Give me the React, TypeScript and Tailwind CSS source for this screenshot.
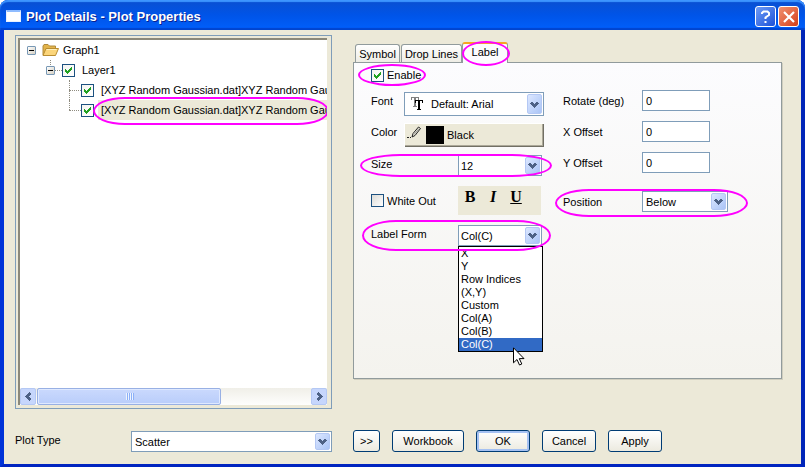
import { useState } from 'react';
import type { ReactNode } from 'react';

const BEVEL = 'shadow-[inset_1px_1px_0_#fff,inset_-1px_-1px_0_#716f64,inset_-2px_-2px_0_#aca899]';

function Chevron({ className = '' }: { className?: string }) {
  return (
    <svg viewBox="0 0 9 7" className={`h-[7px] w-[9px] ${className}`} shapeRendering="crispEdges">
      <path d="M1 1h2v1h1v1h1v-1h1v-1h2v1h1v1h-1v1h-1v1h-1v1h-1v1h-1v-1h-1v-1h-1v-1h-1v-1h-1v-1h1z" fill="#4d6185" />
    </svg>
  );
}

function ArrowBox() {
  return (
    <span className="pointer-events-none absolute inset-y-[2px] right-[2px] flex w-[15px] items-center justify-center rounded-xs border border-[#b4c8f4] bg-linear-to-br from-[#dce7ff] to-[#aac4f6]">
      <Chevron />
    </span>
  );
}

/** Highlight ring that calls attention to a control. */
function Ring({ className }: { className: string }) {
  return <span aria-hidden="true" className={`pointer-events-none absolute z-10 border-2 border-[#ff00ff] ${className}`} />;
}

function Combo({ id, options, value, className, inset = 'pl-[2px]', children }: {
  id: string; options: string[]; value: string; className: string; inset?: string; children?: ReactNode;
}) {
  return (
    <span className={`relative block shrink-0 ${className}`}>
      <select id={id} defaultValue={value} className={`block h-full w-full appearance-none border border-[#7f9db9] bg-white pr-4 outline-none ${inset}`}>
        {options.map((o) => <option key={o}>{o}</option>)}
      </select>
      {children}
      <ArrowBox />
    </span>
  );
}

function Check({ id, label, checked = false }: { id: string; label?: string; checked?: boolean }) {
  return (
    <span className="relative flex h-[14px] shrink-0 items-center gap-[3px]">
      <input id={id} type="checkbox" defaultChecked={checked} aria-label={label ? undefined : id}
        className="peer size-[13px] shrink-0 appearance-none border border-[#1c5180] bg-linear-to-br from-[#dcdcd7] to-white checked:from-[#f4f4f1]" />
      <svg viewBox="0 0 7 7" shapeRendering="crispEdges" className="pointer-events-none invisible absolute left-[3px] h-[7px] w-[7px] peer-checked:visible">
        <path d="M0 2h1v1h1v1h1v-1h1v-1h1v-1h1v-1h1v3h-1v1h-1v1h-1v1h-1v1h-1v-1h-1v-1h-1z" fill="#21a121" />
      </svg>
      {label && <label htmlFor={id} className="whitespace-nowrap">{label}</label>}
    </span>
  );
}

function Toggle({ label }: { label: string }) {
  return (
    <button type="button" aria-label={`Collapse ${label}`} className="relative flex size-[9px] shrink-0 items-center justify-center rounded-[1px] border border-[#7898b5] bg-linear-to-br from-white to-[#d5d0c3]">
      <span className="h-px w-[5px] bg-black" />
    </button>
  );
}

function Folder() {
  return (
    <svg viewBox="0 0 17 14" className="h-[14px] w-[17px]">
      <path d="M1 12V3l1-1.500h4l1.500 1.500h6V6" fill="#e3b44b" stroke="#b08a3c" />
      <path d="M1 12.500 4 5.500h12.500l-3 7z" fill="#fbd57a" stroke="#b98d31" />
      <path d="M4.500 6.500h10" stroke="#fff0bd" />
    </svg>
  );
}

function Tree() {
  const plot = '[XYZ Random Gaussian.dat]XYZ Random Gaussian';
  return (
    <div className="border border-[#7f9db9] bg-[#ece9d8] p-[2px] pr-[4px] pb-[3px]">
      <div className="flex h-full flex-col overflow-hidden border-t-2 border-l-2 border-[#8b887a] bg-white">
        <ul className="relative flex-1">
          <li className="flex h-5 items-center pl-[7px]">
            <Toggle label="Graph1" />
            <span className="ml-[6px]"><Folder /></span>
            <span className="ml-[4px]">Graph1</span>
          </li>
          <li className="relative flex h-5 items-center pl-[26px]">
            <span className="absolute top-0 left-[30px] h-[5px] border-l border-dotted border-[#8f8c80]" />
            <Toggle label="Layer1" />
            <span className="w-[7px] border-t border-dotted border-[#8f8c80]" />
            <Check id="Layer1 visible" checked />
            <span className="ml-[7px]">Layer1</span>
          </li>
          {[0, 1].map((i) => (
            <li key={i} className="relative flex h-5 items-center pl-[49px]">
              <span className={`absolute left-[49px] border-l border-dotted border-[#8f8c80] ${i ? 'top-0 h-[10px]' : 'top-0 h-5'}`} />
              <span className="w-[12px] shrink-0 border-t border-dotted border-[#8f8c80]" />
              <Check id={`Plot ${i + 1} visible`} checked />
              <span className={`ml-[4px] flex h-full min-w-0 flex-1 items-center overflow-hidden pl-[3px] whitespace-nowrap ${i ? 'bg-[#ece9d8]' : ''}`}>{plot}</span>
              {i === 1 && <Ring className="top-[-3px] right-[-2px] left-[73px] h-[28px] rounded-[32px/50%]" />}
            </li>
          ))}
        </ul>
        <div className="flex h-[17px] items-stretch bg-linear-to-b from-[#f0efe8] to-[#fefefd]">
          <button type="button" aria-label="Scroll left" className="flex w-[16px] items-center justify-center rounded-xs border border-[#b4c8f4] bg-[#c6d6fc]"><Chevron className="rotate-90" /></button>
          <div className="flex flex-1">
            <div className="ml-px flex w-[67%] items-center justify-center gap-px rounded-xs border border-[#98b0e4] bg-linear-to-b from-[#cad9fd] to-[#b9cdfa] shadow-[inset_0_0_0_1px_#dfe9ff]">
              {[0, 1, 2, 3].map((n) => <span key={n} className="h-[7px] w-px bg-[#eef4fe] shadow-[1px_0_0_#8cb0f8]" />)}
            </div>
          </div>
          <button type="button" aria-label="Scroll right" className="flex w-[16px] items-center justify-center rounded-xs border border-[#b4c8f4] bg-[#c6d6fc]"><Chevron className="-rotate-90" /></button>
        </div>
      </div>
    </div>
  );
}

const FORMS = ['X', 'Y', 'Row Indices', '(X,Y)', 'Custom', 'Col(A)', 'Col(B)', 'Col(C)'];

function FormList() {
  const [picked, setPicked] = useState('Col(C)');
  return (
    <div className="absolute top-full left-0 z-[5] w-[85px] border border-black bg-white">
      <ul role="listbox" aria-label="Label Form">
        {FORMS.map((f) => (
          <li key={f} role="option" aria-selected={f === picked} onClick={() => setPicked(f)}
            className={`h-[13px] pl-[2px] leading-[13px] ${f === picked ? 'bg-[#316ac5] text-white' : ''}`}>{f}</li>
        ))}
      </ul>
      <svg viewBox="0 0 12 19" className="absolute top-[100px] left-[54px] h-[19px] w-[12px]">
        <path d="M.5.800v15l3.500-3.300 2.500 5.500 2.300-1-2.500-5.400H11z" fill="#fff" stroke="#000" />
      </svg>
    </div>
  );
}

function LabelPage() {
  return (
    <div role="tabpanel" className="flex-1 border border-[#919b9c] bg-linear-to-b from-[#fcfcfe] to-[#f4f3ee] pt-[5px] pl-[17px] shadow-[1px_1px_0_#d0cebf]">
      <div className="relative w-fit">
        <Check id="enable" label="Enable" checked />
        <Ring className="top-[-4px] left-[-13px] h-[22px] w-[68px] rounded-[50%]" />
      </div>
      <div className="flex gap-[19px] pt-[8px]">
        <div className="flex w-[173px] shrink-0 flex-col pt-[2px]">
          <div className="flex h-6 items-start justify-between">
            <label htmlFor="font" className="pt-[2px]">Font</label>
            <Combo id="font" value="Default: Arial" options={['Default: Arial', 'Times New Roman']} className="h-6 w-[140px]" inset="pl-[26px]">
              <svg viewBox="0 0 13 14" shapeRendering="crispEdges" className="pointer-events-none absolute top-[5px] left-[7px] h-[14px] w-[13px]" fill="none">
                <path d="M0 .500h8M.5 0v3M7.500 0v3M2 9.500h4" stroke="#808080" /><path d="M4 1v9" stroke="#808080" strokeWidth="2" />
                <path d="M4 3.500h8M4.500 3v3M11.500 3v3M6 12.500h4" stroke="#000" /><path d="M8 3v10" stroke="#000" strokeWidth="2" />
              </svg>
            </Combo>
          </div>
          <div className="mt-[7px] flex h-6 items-start justify-between">
            <span className="pt-[2px]">Color</span>
            <button type="button" className={`flex h-6 w-[140px] items-center bg-[#ece9d8] pl-[3px] ${BEVEL}`}>
              <svg viewBox="0 0 15 13" className="mb-[5px] h-[13px] w-[15px]" fill="none" stroke="#222">
                <path d="M0 11.500h2M3 11.500h1M5 11l1-3.500L11.500 1l2 1.500L8 9.500z" /><path d="M7 8.500 12 2.500" stroke="#999" />
              </svg>
              <span className="ml-[4px] size-[18px] bg-black" />
              <span className="ml-[3px]">Black</span>
            </button>
          </div>
          <div className="relative mt-[8px] flex h-[21px] items-start">
            <label htmlFor="size" className="w-[87px] pt-[2px]">Size</label>
            <Combo id="size" value="12" options={['8', '10', '12', '14']} className="h-[21px] w-[84px]" />
            <Ring className="top-[-1px] left-[-11px] h-[23px] w-[192px] rounded-[40px/50%]" />
          </div>
          <div className="mt-[10px] flex h-[29px] items-center">
            <span className="w-[87px]"><Check id="whiteout" label="White Out" /></span>
            <div className="flex h-[29px] w-[83px] items-start gap-[5px] bg-[#ece9d8] pt-[3px] pl-[3px] font-['Liberation_Serif',serif] text-[16px] leading-4 font-bold">
              <button type="button" aria-label="Bold" className="w-[18px]">B</button>
              <button type="button" aria-label="Italic" className="w-[18px] italic">I</button>
              <button type="button" aria-label="Underline" className="w-[18px] underline underline-offset-1">U</button>
            </div>
          </div>
          <div className="relative mt-[10px] flex h-[21px] items-start">
            <label htmlFor="form" className="w-[87px] pt-[2px]">Label Form</label>
            <div className="relative">
              <Combo id="form" value="Col(C)" options={FORMS} className="h-[21px] w-[84px]" />
              <FormList />
            </div>
            <Ring className="top-[-5px] left-[-9px] h-[31px] w-[189px] rounded-[34px/50%]" />
          </div>
        </div>
        <div className="flex flex-col gap-[10px]">
          {['Rotate (deg)', 'X Offset', 'Y Offset'].map((name) => (
            <div key={name} className="flex h-[21px] items-center">
              <label htmlFor={name} className="w-[79px]">{name}</label>
              <input id={name} defaultValue="0" className="h-[21px] w-[68px] border border-[#7f9db9] bg-white pl-[3px] outline-none" />
            </div>
          ))}
          <div className="relative mt-[8px] flex h-[21px] items-center">
            <label htmlFor="position" className="w-[79px]">Position</label>
            <Combo id="position" value="Below" options={['Below', 'Above', 'Center', 'Left', 'Right']} className="h-[21px] w-[86px]" inset="pl-[3px]" />
            <Ring className="top-[-2px] left-[-8px] h-[28px] w-[193px] rounded-[34px/50%]" />
          </div>
        </div>
      </div>
    </div>
  );
}

const BUTTONS = [
  { text: '>>', width: 'w-[27px]' },
  { text: 'Workbook', width: 'w-[72px]' },
  { text: 'OK', width: 'w-[54px]' },
  { text: 'Cancel', width: 'w-[54px]' },
  { text: 'Apply', width: 'w-[54px]' },
];

export default function App() {
  const tab = 'h-[18px] rounded-t-[3px] border border-b-0 border-[#919b9c] bg-linear-to-b from-white to-[#eeede5]';
  return (
    <main className="flex min-h-screen flex-col rounded-t-lg bg-[#0842dc] font-['Liberation_Sans',Arial,sans-serif] text-[11px] leading-[14px] text-black">
      <header className="flex h-[30px] shrink-0 items-center rounded-t-lg bg-linear-to-b from-[#0a4fd0] via-[#0054e8] to-[#0060fc] pr-[6px] pl-[6px] shadow-[inset_0_2px_1px_#3d95ff,inset_0_-2px_1px_#0044cf]">
        <span className="mt-px h-[12px] w-[15px] border border-t-2 border-[#e8f0ff] border-t-[#8fbcff] bg-white" />
        <h1 className="ml-[5px] flex-1 pt-[3px] text-[13px] leading-4 font-bold text-white [text-shadow:1px_1px_0_#0a1f8f]">Plot Details - Plot Properties</h1>
        <div className="flex gap-[2px] pt-[3px]">
          <button type="button" aria-label="Help" className="flex size-[21px] items-center justify-center rounded-[3px] border border-white bg-linear-to-br from-[#6f9bf5] to-[#1c4fd8]">
            <svg viewBox="0 0 11 13" className="h-[13px] w-[11px]" fill="none" stroke="#fff" strokeWidth="2"><path d="M2 4V3l1.500-1.500h4L9 3v2L5.500 7.500V9M5.500 11v2" /></svg>
          </button>
          <button type="button" aria-label="Close" className="flex size-[21px] items-center justify-center rounded-[3px] border border-white bg-linear-to-br from-[#f0906f] to-[#d43c12]">
            <svg viewBox="0 0 12 12" className="size-[12px]" stroke="#fff" strokeWidth="2.200"><path d="M1 1 11 11M11 1 1 11" /></svg>
          </button>
        </div>
      </header>
      <div className="flex flex-1 flex-col border-x-4 border-b-[3px] border-t-0 border-[#0033d8] border-r-[#0025b8] border-b-[#0025c0] bg-[#ece9d8] pt-[5px] pr-[19px] pb-[11px] pl-[11px]">
        <div className="grid flex-1 grid-cols-[317px_1fr] gap-x-[21px]">
          <Tree />
          <section className="flex flex-col pt-[7px] pb-[30px]">
            <div role="tablist" className="relative z-[1] -mb-px flex h-[21px] items-end pl-[2px]">
              <button type="button" role="tab" aria-selected="false" className={`mb-px w-[45px] ${tab}`}>Symbol</button>
              <button type="button" role="tab" aria-selected="false" className={`mb-px ml-px w-[61px] ${tab}`}>Drop Lines</button>
              <button type="button" role="tab" aria-selected="true" className="relative h-[21px] w-[46px] rounded-t-[3px] border-x border-t-2 border-x-[#919b9c] border-t-[#f5a623] bg-[#fcfcfe] pb-[3px] text-center">
                Label
                <Ring className="top-[-3px] left-[-1px] h-[25px] w-[48px] rounded-[50%]" />
              </button>
            </div>
            <LabelPage />
          </section>
        </div>
        <div className="mt-[21px] flex h-[23px] gap-[21px]">
          <div className="flex w-[317px] shrink-0 items-center">
            <label htmlFor="plottype" className="w-[116px] pb-[4px]">Plot Type</label>
            <Combo id="plottype" value="Scatter" options={['Scatter', 'Line', 'Line + Symbol']} className="h-[21px] w-[201px]" inset="pl-[3px]" />
          </div>
          <div className="flex gap-[12px]">
            {BUTTONS.map(({ text, width }) => (
              <button key={text} type="button" className={`h-[22px] rounded-[3px] border border-[#003c74] bg-linear-to-b from-white to-[#eceadf] ${width} ${text === 'OK' ? 'shadow-[inset_0_0_0_2px_#a5c1f2]' : ''}`}>{text}</button>
            ))}
          </div>
        </div>
      </div>
    </main>
  );
}
